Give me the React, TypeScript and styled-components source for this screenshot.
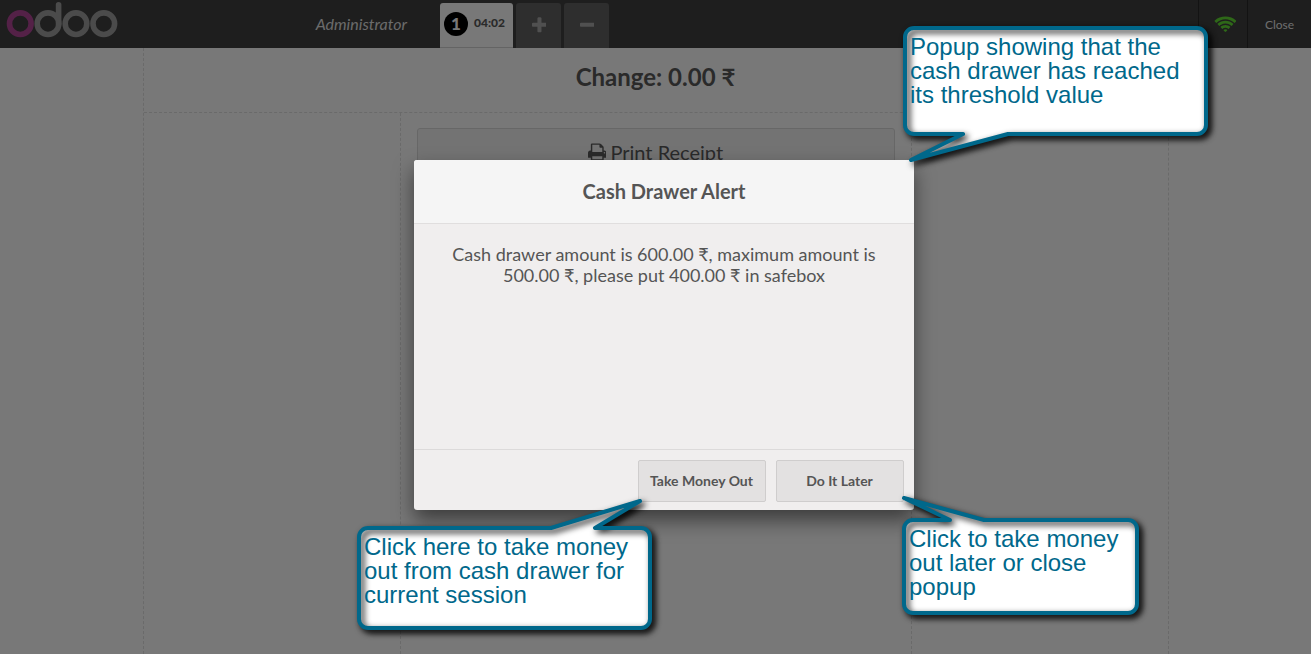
import React from 'react';
import styled, { createGlobalStyle } from 'styled-components';

const GlobalStyle = createGlobalStyle`
  * { box-sizing: border-box; }
  body {
    margin: 0;
    font-family: Lato, 'Noto Sans', sans-serif;
    color: #555555;
    background: #f0f0f0;
  }
  h1, h2, p { margin: 0; }
  button { font-family: inherit; color: inherit; cursor: pointer; }
`;

const Page = styled.div`
  position: relative;
  display: flex;
  flex-direction: column;
  min-height: 100vh;
  overflow: hidden;
`;

const TopBar = styled.header`
  display: flex;
  height: 48px;
  background: #3c3c3c;
`;

const Brand = styled.div`
  flex: 1;
  max-width: 440px;
  display: flex;
  align-items: center;
  justify-content: space-between;
  padding: 0 33px 2px 0;
`;

const Logo = styled.svg`
  align-self: flex-start;
  display: block;
`;

const UserName = styled.span`
  font-size: 16px;
  font-style: italic;
  color: #d6d6d6;
`;

const Orders = styled.nav`
  flex: 1;
  display: flex;
  gap: 3px;
  padding-top: 3px;
`;

const OrderTab = styled.button`
  display: flex;
  align-items: center;
  gap: 6px;
  width: 73px;
  padding: 0 4px 2px;
  border: 0;
  border-bottom: 1px solid #c8c8c8;
  border-radius: 3px 3px 0 0;
  background: #f0f0f0;
  color: #555555;
  font-size: 12px;
  line-height: 14px;
  font-weight: 900;
`;

const OrderTime = styled.time`
  padding-bottom: 2px;
`;

const OrderNumber = styled.span`
  display: flex;
  align-items: center;
  justify-content: center;
  width: 24px;
  height: 24px;
  border-radius: 50%;
  background: #000000;
  color: #f0f0f0;
  font-size: 17px;
`;

const TabButton = styled.button`
  display: flex;
  align-items: center;
  justify-content: center;
  width: 45px;
  padding: 0 0 0 1px;
  border: 0;
  border-radius: 3px 3px 0 0;
  background: #5c5c5c;
  color: #a0a0a0;
`;

const StatusCell = styled.div`
  display: flex;
  align-items: center;
  justify-content: center;
  width: 49px;
  padding: 2px 0 0 4px;
  border-left: 1px solid #262626;
  color: #5cd030;
`;

const CloseButton = styled.button`
  width: 64px;
  padding: 0;
  border: 0;
  border-left: 1px solid #262626;
  background: transparent;
  color: #dcdcdc;
  font-size: 12px;
`;

const dashed = '1px dashed #d4d4d4';

const Receipt = styled.main`
  flex: 1;
  display: flex;
  flex-direction: column;
  width: 100%;
  max-width: 1026px;
  margin: 0 auto;
  border-left: ${dashed};
  border-right: ${dashed};
`;

const ChangeBar = styled.div`
  height: 65px;
  padding-top: 14px;
  border-bottom: ${dashed};
  text-align: center;
`;

const ChangeText = styled.h1`
  font-size: 24px;
  line-height: 29px;
  font-weight: 700;
`;

const Columns = styled.div`
  flex: 1;
  display: grid;
  grid-template-columns: 1fr 2fr 1fr;
`;

const ReceiptPane = styled.section`
  grid-column: 2;
  padding: 15px 16px;
  border-left: ${dashed};
  border-right: ${dashed};
`;

const PrintButton = styled.button`
  display: flex;
  align-items: center;
  justify-content: center;
  gap: 4px;
  width: 100%;
  height: 47px;
  padding: 0;
  border: 1px solid #cfcfcf;
  border-radius: 3px;
  background: #e6e6e6;
  font-size: 20px;
`;

const Backdrop = styled.div`
  position: absolute;
  inset: 0;
  display: flex;
  align-items: center;
  justify-content: center;
  padding: 16px 0 0 17px;
  background: rgba(0, 0, 0, 0.5);
`;

const Dialog = styled.div`
  position: relative;
  display: flex;
  flex-direction: column;
  width: 500px;
  min-height: 350px;
  border-radius: 3px;
  background: #f0eeee;
  box-shadow: 0 10px 20px rgba(0, 0, 0, 0.5);
`;

const DialogTitle = styled.h2`
  padding: 16px;
  border-bottom: 1px solid #e0dede;
  border-radius: 3px 3px 0 0;
  background: #f5f5f5;
  font-size: 20px;
  line-height: 31px;
  font-weight: 700;
  text-align: center;
`;

const DialogBody = styled.p`
  flex: 1;
  padding: 20px 32px;
  font-size: 18px;
  line-height: 21px;
  text-align: center;
`;

const DialogFooter = styled.footer`
  display: flex;
  justify-content: flex-end;
  gap: 10px;
  padding: 10px 10px 8px;
  border-top: 1px solid #dcdada;
`;

const DialogButton = styled.button`
  width: 128px;
  height: 42px;
  padding: 0 1px 2px 0;
  border: 1px solid #cfcdcd;
  border-radius: 2px;
  background: #e3e1e1;
  font-size: 14px;
  font-weight: 700;
`;

const CalloutBox = styled.aside<{ $left: number; $top: number; $width: number; $height: number }>`
  position: absolute;
  left: ${(p) => p.$left}px;
  top: ${(p) => p.$top}px;
  width: ${(p) => p.$width}px;
  height: ${(p) => p.$height}px;
  padding: 9px 7px;
`;

const CalloutShape = styled.svg`
  position: absolute;
  inset: 0;
  overflow: visible;
  .fill { fill: #ffffff; filter: drop-shadow(4px 4px 3px rgba(0, 0, 0, 0.8)); }
  .line {
    fill: none;
    stroke: #00688b;
    stroke-width: 4;
    stroke-linejoin: round;
    filter: drop-shadow(3px 3px 3px rgba(0, 0, 0, 0.9));
  }
`;

const CalloutText = styled.p`
  position: relative;
  color: #00688b;
  font-family: 'Liberation Sans', Arial, sans-serif;
  font-size: 24px;
  line-height: 24px;
  white-space: nowrap;
`;

type CalloutProps = {
  left: number;
  top: number;
  width: number;
  height: number;
  tailSide: 'top' | 'bottom';
  /* left foot x, tip x, tip y, right foot x */
  tail: [number, number, number, number];
  lines: string[];
};

function Callout({ left, top, width: w, height: h, tailSide, tail, lines }: CalloutProps) {
  const [from, tipX, tipY, to] = tail;
  const r = 9;
  const topTail = tailSide === 'top' ? `H${from}L${tipX} ${tipY}L${to} 2` : '';
  const bottomTail = tailSide === 'bottom' ? `H${to}L${tipX} ${tipY}L${from} ${h - 2}` : '';
  const d =
    `M${2 + r} 2${topTail}H${w - 2 - r}a${r} ${r} 0 0 1 ${r} ${r}V${h - 2 - r}` +
    `a${r} ${r} 0 0 1 ${-r} ${r}${bottomTail}H${2 + r}a${r} ${r} 0 0 1 ${-r} ${-r}` +
    `V${2 + r}a${r} ${r} 0 0 1 ${r} ${-r}z`;
  return (
    <CalloutBox $left={left} $top={top} $width={w} $height={h}>
      <CalloutShape width={w} height={h} aria-hidden="true">
        <path className="fill" d={d} />
        <path className="line" d={d} />
      </CalloutShape>
      <CalloutText>
        {lines.map((line, i) => (
          <React.Fragment key={line}>
            {i > 0 && <br />}
            {line}
          </React.Fragment>
        ))}
      </CalloutText>
    </CalloutBox>
  );
}

const PLUS =
  'M1408 736v192q0 40-28 68t-68 28h-416v416q0 40-28 68t-68 28h-192q-40 0-68-28t-28-68v-416h-416q-40 0-68-28t-28-68v-192q0-40 28-68t68-28h416v-416q0-40 28-68t68-28h192q40 0 68 28t28 68v416h416q40 0 68 28t28 68z';
const MINUS =
  'M1408 736v192q0 40-28 68t-68 28h-1216q-40 0-68-28t-28-68v-192q0-40 28-68t68-28h1216q40 0 68 28t28 68z';
const PRINT =
  'M384 1536h896v-256h-896v256zM384 896h896v-384h-160q-40 0-68-28t-28-68v-160h-640v640zM1536 960q0-26-19-45t-45-19-45 19-19 45 19 45 45 19 45-19 19-45zM1664 960v416q0 13-9.5 22.5t-22.5 9.5h-224v160q0 40-28 68t-68 28h-960q-40 0-68-28t-28-68v-160h-224q-13 0-22.5-9.5t-9.5-22.5v-416q0-79 56.5-135.5t135.5-56.5h64v-544q0-40 28-68t68-28h672q40 0 88 20t76 48l152 152q28 28 48 76t20 88v256h64q79 0 135.5 56.5t56.5 135.5z';
const WIFI =
  'M1024 1523q-20 0-93-73.5t-73-93.5q0-32 62.5-54t103.5-22 103.5 22 62.5 54q0 20-73 93.5t-93 73.5zM1294 1251q-2 0-40-25t-101.5-50-128.5-25-128.5 25-101 50-40.5 25q-18 0-93.5-75t-75.5-93q0-13 10-23 78-77 196-121t233-44 233 44 196 121q10 10 10 23 0 18-75.5 93t-93.5 75zM1567 980q-11 0-23-8-136-105-252-154.5t-268-49.5q-85 0-170.5 22t-149 53-113.5 62-79 53-31 22q-17 0-92-75t-75-93q0-12 10-22 132-132 320-205t380-73 380 73 320 205q10 10 10 22 0 18-75 93t-92 75zM1838 709q-11 0-22-9-179-157-371.5-236.5t-420.5-79.5-420.5 79.5-371.5 236.5q-11 9-22 9-17 0-92.5-75t-75.5-93q0-13 10-23 187-186 445-288t527-102 527 102 445 288q10 10 10 23 0 18-75.5 93t-92.5 75z';

function Icon({ d, box, size }: { d: string; box: number; size: number }) {
  return (
    <svg width={(box / 1792) * size} height={size} viewBox={`0 0 ${box} 1792`} fill="currentColor" aria-hidden="true">
      <path d={d} />
    </svg>
  );
}

export default function App() {
  return (
    <>
      <GlobalStyle />
      <Page>
        <TopBar>
          <Brand>
            <Logo width="124" height="40" viewBox="0 0 124 40" fill="none" strokeWidth="5.6" role="img" aria-label="odoo">
              <circle cx="20.3" cy="23.7" r="10.8" stroke="#a8428f" />
              <g stroke="#969696">
                <circle cx="48" cy="23.7" r="10.8" />
                <path d="M58.6 24V4.8" strokeLinecap="round" />
                <circle cx="76" cy="23.7" r="10.8" />
                <circle cx="103.8" cy="23.7" r="10.8" />
              </g>
            </Logo>
            <UserName>Administrator</UserName>
          </Brand>
          <Orders aria-label="Orders">
            <OrderTab>
              <OrderNumber>1</OrderNumber>
              <OrderTime>04:02</OrderTime>
            </OrderTab>
            <TabButton aria-label="New order">
              <Icon d={PLUS} box={1408} size={19} />
            </TabButton>
            <TabButton aria-label="Remove order">
              <Icon d={MINUS} box={1408} size={19} />
            </TabButton>
          </Orders>
          <StatusCell>
            <Icon d={WIFI} box={2048} size={20} />
          </StatusCell>
          <CloseButton>Close</CloseButton>
        </TopBar>

        <Receipt>
          <ChangeBar>
            <ChangeText>Change: 0.00 ₹</ChangeText>
          </ChangeBar>
          <Columns>
            <ReceiptPane>
              <PrintButton>
                <Icon d={PRINT} box={1664} size={20} />
                Print Receipt
              </PrintButton>
            </ReceiptPane>
          </Columns>
        </Receipt>

        <Backdrop>
          <Dialog role="dialog" aria-labelledby="alert-title">
            <DialogTitle id="alert-title">Cash Drawer Alert</DialogTitle>
            <DialogBody>
              Cash drawer amount is 600.00 ₹, maximum amount is 500.00 ₹, please put 400.00 ₹ in safebox
            </DialogBody>
            <DialogFooter>
              <DialogButton>Take Money Out</DialogButton>
              <DialogButton>Do It Later</DialogButton>
            </DialogFooter>
            <Callout
              left={489}
              top={-134}
              width={305}
              height={110}
              tailSide="bottom"
              tail={[60, 8, 134, 105]}
              lines={['Popup showing that the', 'cash drawer has reached', 'its threshold value']}
            />
            <Callout
              left={-57}
              top={366}
              width={295}
              height={104}
              tailSide="top"
              tail={[194, 283, -25, 238]}
              lines={['Click here to take money', 'out from cash drawer for', 'current session']}
            />
            <Callout
              left={488}
              top={358}
              width={237}
              height={97}
              tailSide="top"
              tail={[48, 2, -20, 82]}
              lines={['Click to take money', 'out later or close', 'popup']}
            />
          </Dialog>
        </Backdrop>
      </Page>
    </>
  );
}
